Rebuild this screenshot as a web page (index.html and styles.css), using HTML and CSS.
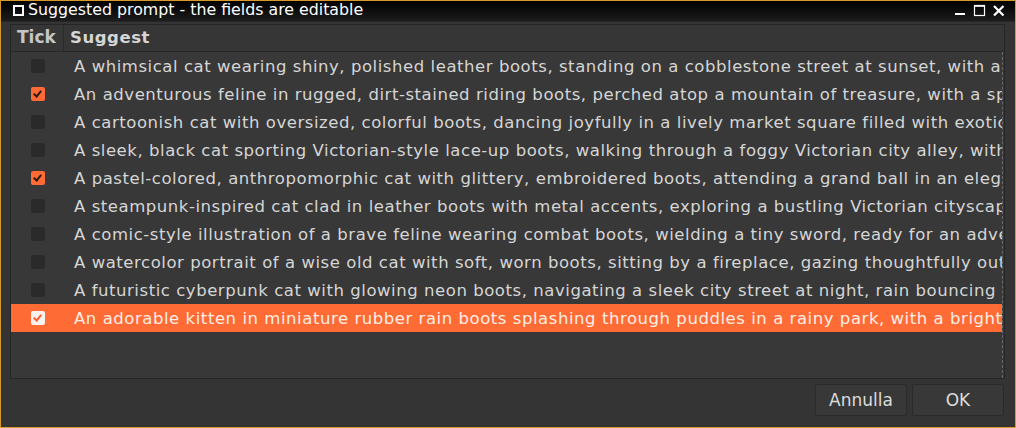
FILE: index.html
```html
<!DOCTYPE html>
<html lang="en">
<head>
    <meta charset="UTF-8">
    <title>Suggested prompt</title>
    <link rel="stylesheet" href="styles.css">
</head>
<body>
    <div class="window">
        <div class="titlebar">
            <span class="title-icon"></span>
            <span class="title">Suggested prompt - the fields are editable</span>
            <div class="controls">
                <svg width="14" height="14" viewBox="0 0 14 14"><rect x="1" y="9" width="10" height="2" fill="#fff"/></svg>
                <svg width="14" height="14" viewBox="0 0 14 14"><rect x="1.5" y="1.5" width="10" height="10" fill="none" stroke="#fff" stroke-width="1.2"/><rect x="1" y="1" width="11" height="1.8" fill="#fff"/></svg>
                <svg width="14" height="14" viewBox="0 0 14 14"><path d="M2 2 L11.5 11.5 M11.5 2 L2 11.5" stroke="#fff" stroke-width="2.2"/></svg>
            </div>
        </div>

        <div class="content">
            <div class="table">
                <div class="row head">
                    <div class="cell tick">Tick</div>
                    <div class="cell text">Suggest</div>
                </div>
                <div class="rows">
                    <div class="row"><div class="cell tick"><span class="box"></span></div><div class="cell text">A whimsical cat wearing shiny, polished leather boots, standing on a cobblestone street at sunset, with a warm glow</div></div>
                    <div class="row"><div class="cell tick"><span class="box on"></span></div><div class="cell text">An adventurous feline in rugged, dirt-stained riding boots, perched atop a mountain of treasure, with a sparkling sky</div></div>
                    <div class="row"><div class="cell tick"><span class="box"></span></div><div class="cell text">A cartoonish cat with oversized, colorful boots, dancing joyfully in a lively market square filled with exotic fruits</div></div>
                    <div class="row"><div class="cell tick"><span class="box"></span></div><div class="cell text">A sleek, black cat sporting Victorian-style lace-up boots, walking through a foggy Victorian city alley, with lanterns</div></div>
                    <div class="row"><div class="cell tick"><span class="box on"></span></div><div class="cell text">A pastel-colored, anthropomorphic cat with glittery, embroidered boots, attending a grand ball in an elegant palace</div></div>
                    <div class="row"><div class="cell tick"><span class="box"></span></div><div class="cell text">A steampunk-inspired cat clad in leather boots with metal accents, exploring a bustling Victorian cityscape</div></div>
                    <div class="row"><div class="cell tick"><span class="box"></span></div><div class="cell text">A comic-style illustration of a brave feline wearing combat boots, wielding a tiny sword, ready for an adventure</div></div>
                    <div class="row"><div class="cell tick"><span class="box"></span></div><div class="cell text">A watercolor portrait of a wise old cat with soft, worn boots, sitting by a fireplace, gazing thoughtfully out</div></div>
                    <div class="row"><div class="cell tick"><span class="box"></span></div><div class="cell text">A futuristic cyberpunk cat with glowing neon boots, navigating a sleek city street at night, rain bouncing off</div></div>
                    <div class="row selected"><div class="cell tick"><span class="box on"></span></div><div class="cell text">An adorable kitten in miniature rubber rain boots splashing through puddles in a rainy park, with a bright umbrella</div></div>
                </div>
            </div>

            <div class="footer">
                <button class="btn">Annulla</button>
                <button class="btn">OK</button>
            </div>
        </div>
    </div>
</body>
</html>
```

FILE: styles.css
```css
html, body {
    margin: 0;
    padding: 0;
    background-color: #000;
}

body {
    font-family: "DejaVu Sans", sans-serif;
    width: 1016px;
    height: 428px;
    overflow: hidden;
}

.window {
    box-sizing: border-box;
    width: 1016px;
    height: 428px;
    border: 1px solid #d99a2c;
    background-color: #333333;
    display: flex;
    flex-direction: column;
}

.titlebar {
    height: 20px;
    background: linear-gradient(#000000, #1c1c1c);
    display: flex;
    align-items: center;
    color: #ffffff;
    font-size: 15.8px;
    flex-shrink: 0;
}

.title-icon {
    width: 7px;
    height: 7px;
    border: 2px solid #fff;
    margin-left: 12px;
    margin-right: 4px;
    margin-top: -1px;
}

.title {
    line-height: 18px;
    margin-top: -3px;
}

.controls {
    margin-left: auto;
    display: flex;
    gap: 5px;
    margin-right: 9px;
}

.content {
    flex: 1;
    display: flex;
    flex-direction: column;
    padding: 2px 10px 0 9px;
    border-top: 1px solid #262626;
    background-color: #343434;
}

.table {
    height: 353px;
    border: 1px solid #262626;
    background-color: #383838;
    overflow: hidden;
    display: flex;
    flex-direction: column;
}

.row {
    display: flex;
    height: 28px;
    align-items: center;
    white-space: nowrap;
}

.head {
    background-color: #363636;
    border-bottom: 1px solid #282828;
    color: #c6c6c6;
    font-weight: bold;
    font-size: 17px;
    height: 26px;
    flex-shrink: 0;
}

.head .cell {
    padding-bottom: 2px;
    box-sizing: border-box;
}

.head .tick {
    border-right: 1px solid #2a2a2a;
    justify-content: flex-start;
    padding-left: 6px;
}

.head .text {
    padding-left: 6px;
}

.rows {
    flex: 1;
    border-right: 1px dashed #6a6a6a;
    margin-right: 1px;
    overflow: hidden;
}

.cell {
    display: flex;
    align-items: center;
    height: 100%;
}

.tick {
    width: 53px;
    flex-shrink: 0;
    justify-content: center;
}

.text {
    padding-left: 10px;
    color: #d6d6d6;
    font-size: 16.5px;
    letter-spacing: 0.55px;
    overflow: hidden;
}

.box {
    width: 14px;
    height: 14px;
    border-radius: 2px;
    background-color: #2a2a2a;
    position: relative;
}

.box.on {
    background-color: #ff6a35;
}

.box.on::after {
    content: "";
    position: absolute;
    left: 4px;
    top: 2px;
    width: 3px;
    height: 6px;
    border: solid #2a1a10;
    border-width: 0 2px 2px 0;
    transform: rotate(40deg);
}

.selected {
    background-color: #ff6b35;
}

.selected .text {
    color: #fdeee6;
}

.selected .box.on {
    background-color: #f6f2f0;
}

.selected .box.on::after {
    border-color: #ff5a30;
}

.footer {
    display: flex;
    justify-content: flex-end;
    gap: 5px;
    padding-top: 5px;
    padding-right: 1px;
}

.btn {
    width: 92px;
    height: 32px;
    background-color: #383838;
    border: 1px solid #2a2a2a;
    border-radius: 2px;
    color: #dcdcdc;
    font-family: "DejaVu Sans", sans-serif;
    font-size: 17px;
    cursor: pointer;
}
```
